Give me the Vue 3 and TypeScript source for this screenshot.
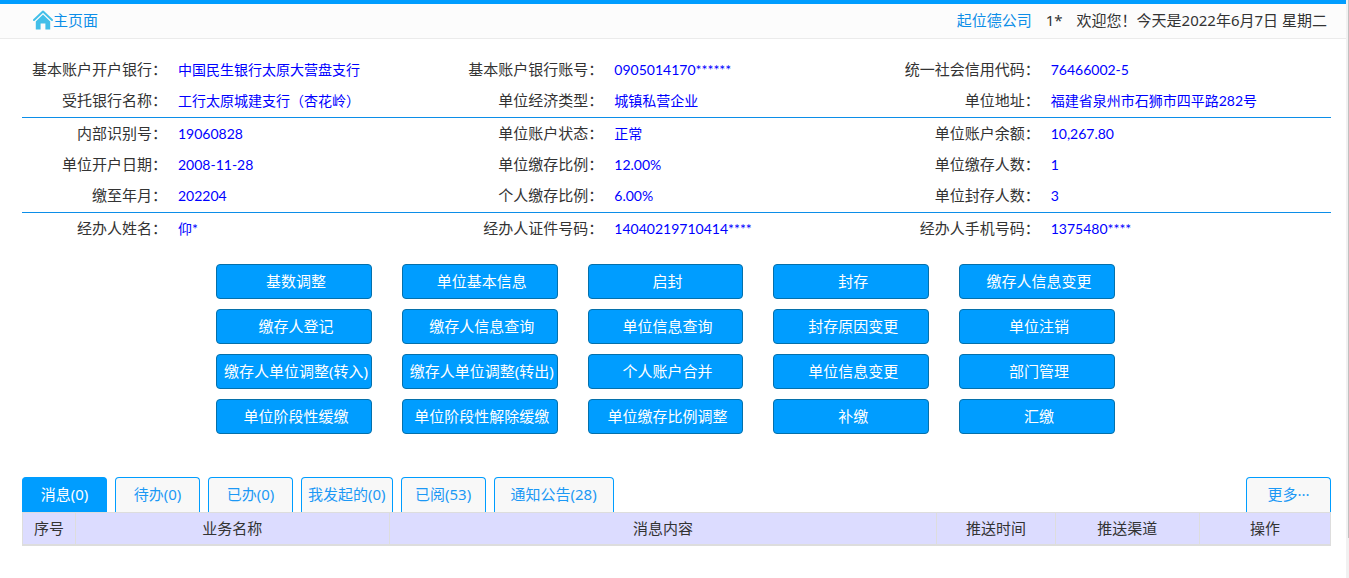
<script setup lang="ts">
interface Field { label: string; value: string }

const groups: Field[][] = [
  [
    { label: '基本账户开户银行', value: '中国民生银行太原大营盘支行' },
    { label: '基本账户银行账号', value: '0905014170******' },
    { label: '统一社会信用代码', value: '76466002-5' },
    { label: '受托银行名称', value: '工行太原城建支行（杏花岭）' },
    { label: '单位经济类型', value: '城镇私营企业' },
    { label: '单位地址', value: '福建省泉州市石狮市四平路282号' },
  ],
  [
    { label: '内部识别号', value: '19060828' },
    { label: '单位账户状态', value: '正常' },
    { label: '单位账户余额', value: '10,267.80' },
    { label: '单位开户日期', value: '2008-11-28' },
    { label: '单位缴存比例', value: '12.00%' },
    { label: '单位缴存人数', value: '1' },
    { label: '缴至年月', value: '202204' },
    { label: '个人缴存比例', value: '6.00%' },
    { label: '单位封存人数', value: '3' },
  ],
  [
    { label: '经办人姓名', value: '仰*' },
    { label: '经办人证件号码', value: '14040219710414****' },
    { label: '经办人手机号码', value: '1375480****' },
  ],
]

const actions: string[] = [
  '基数调整', '单位基本信息', '启封', '封存', '缴存人信息变更',
  '缴存人登记', '缴存人信息查询', '单位信息查询', '封存原因变更', '单位注销',
  '缴存人单位调整(转入)', '缴存人单位调整(转出)', '个人账户合并', '单位信息变更', '部门管理',
  '单位阶段性缓缴', '单位阶段性解除缓缴', '单位缴存比例调整', '补缴', '汇缴',
]

const tabs: string[] = ['消息(0)', '待办(0)', '已办(0)', '我发起的(0)', '已阅(53)', '通知公告(28)']
const columns = [
  { title: '序号', cls: 'c-no' },
  { title: '业务名称', cls: 'c-name' },
  { title: '消息内容', cls: 'c-content' },
  { title: '推送时间', cls: 'c-time' },
  { title: '推送渠道', cls: 'c-channel' },
  { title: '操作', cls: 'c-op' },
]
</script>

<template>
  <div class="page">
    <div class="scroll-track" aria-hidden="true"><div class="scroll-thumb"></div></div>
    <header class="topbar">
      <a href="#" class="home">
        <svg class="home-icon" viewBox="0 0 20 20" aria-hidden="true">
          <path d="M1 10 10 1.5l9 8.5" fill="none" stroke="#42bfe9" stroke-width="2" stroke-linecap="round" stroke-linejoin="round" />
          <path d="M2.8 11.4 10 4.6l7.2 6.8V19.6h-4.8v-6.2H7.6v6.2H2.8z" fill="#42bfe9" />
        </svg>
        <span>主页面</span>
      </a>
      <div class="welcome">
        <a href="#" class="company">起位德公司</a>
        <span>1*</span>
        <span>欢迎您！今天是2022年6月7日 星期二</span>
      </div>
    </header>

    <main class="content">
      <section class="info">
        <dl v-for="(group, g) in groups" :key="g" class="group">
          <div v-for="f in group" :key="f.label" class="field">
            <dt>{{ f.label }}：</dt>
            <dd>{{ f.value }}</dd>
          </div>
        </dl>
      </section>

      <section class="actions">
        <button v-for="a in actions" :key="a" type="button" class="action">{{ a }}</button>
      </section>

      <section>
        <div class="tabs">
          <button v-for="(t, i) in tabs" :key="t" type="button" class="tab" :class="{ active: i === 0, wide: i === 5 }">{{ t }}</button>
          <button type="button" class="tab more">更多···</button>
        </div>
        <table class="messages">
          <thead>
            <tr><th v-for="c in columns" :key="c.title" :class="c.cls" scope="col">{{ c.title }}</th></tr>
          </thead>
        </table>
      </section>
    </main>
  </div>
</template>

<style>
body { margin: 0; background: #fff; }
</style>

<style scoped>
.page {
  position: relative;
  box-sizing: border-box;
  min-height: 100vh;
  padding-right: 3px;
  font-family: "Noto Sans", "Noto Sans CJK SC", sans-serif;
  font-size: 15px;
  line-height: 20px;
  color: #333;
}
a { color: #0c8ee8; text-decoration: none; }
.scroll-track {
  position: absolute;
  top: 0;
  right: 0;
  bottom: 0;
  width: 3px;
  background: #f1f1f1;
}
.scroll-thumb {
  width: 1px;
  height: 93%;
  margin-left: auto;
  background: #c1c1c1;
}
.topbar {
  display: flex;
  justify-content: space-between;
  align-items: center;
  height: 32px;
  padding: 0 19px 2px 33px;
  border-top: 4px solid #009dff;
  border-bottom: 1px solid #ebebeb;
  background: #fcfcfc;
}
.home { display: flex; align-items: center; }
.home-icon { width: 20px; height: 20px; }
.welcome { display: flex; gap: 14px; }
.content { padding: 15px 15px 0 22px; }
.group {
  display: grid;
  grid-template-columns: repeat(3, 1fr);
  row-gap: 1px;
  margin: 0;
  padding: 1px 0;
}
.group + .group { border-top: 1px solid #0c8ee8; }
.field { display: flex; align-items: center; height: 30px; }
dt {
  width: 145px;
  padding-bottom: 2px;
  text-align: right;
  white-space: nowrap;
}
dd {
  margin: 0 0 0 11px;
  font-family: Lato, "Noto Sans CJK SC", sans-serif;
  font-size: 14px;
  color: #00f;
  white-space: nowrap;
}
.actions {
  display: grid;
  grid-template-columns: repeat(5, 1fr);
  gap: 10px 30px;
  margin: 19px 216px 0 194px;
}
.action {
  box-sizing: border-box;
  height: 35px;
  min-width: 0;
  padding: 0 0 2px 4px;
  border: 1px solid #0470ab;
  border-radius: 4px;
  background: #009dff;
  color: #fff;
  font-family: inherit;
  font-size: 15px;
  line-height: 20px;
  white-space: nowrap;
}
.tabs { display: flex; gap: 8px; margin-top: 43px; }
.tab {
  box-sizing: border-box;
  min-width: 85px;
  height: 35px;
  padding: 0 6px 2px;
  border: 1px solid #009dff;
  border-bottom: 0;
  border-radius: 4px 4px 0 0;
  background: #f8f8f8;
  color: #1c98f5;
  font-family: inherit;
  font-size: 15px;
  line-height: 20px;
  white-space: nowrap;
}
.tab.active { background: #009dff; color: #fff; }
.tab.wide { min-width: 120px; }
.tab.more { margin-left: auto; }
.messages {
  width: 100%;
  table-layout: fixed;
  border-collapse: collapse;
  border-bottom: 2px solid #ddd;
}
th {
  height: 29px;
  padding: 0 0 2px;
  border: 1px solid #ddd;
  background: #dcdcff;
  font-weight: 400;
}
.c-no { width: 4%; }
.c-name { width: 24%; }
.c-content { width: 42%; }
.c-time { width: 9%; }
.c-channel { width: 11%; }
.c-op { width: 10%; }
</style>
